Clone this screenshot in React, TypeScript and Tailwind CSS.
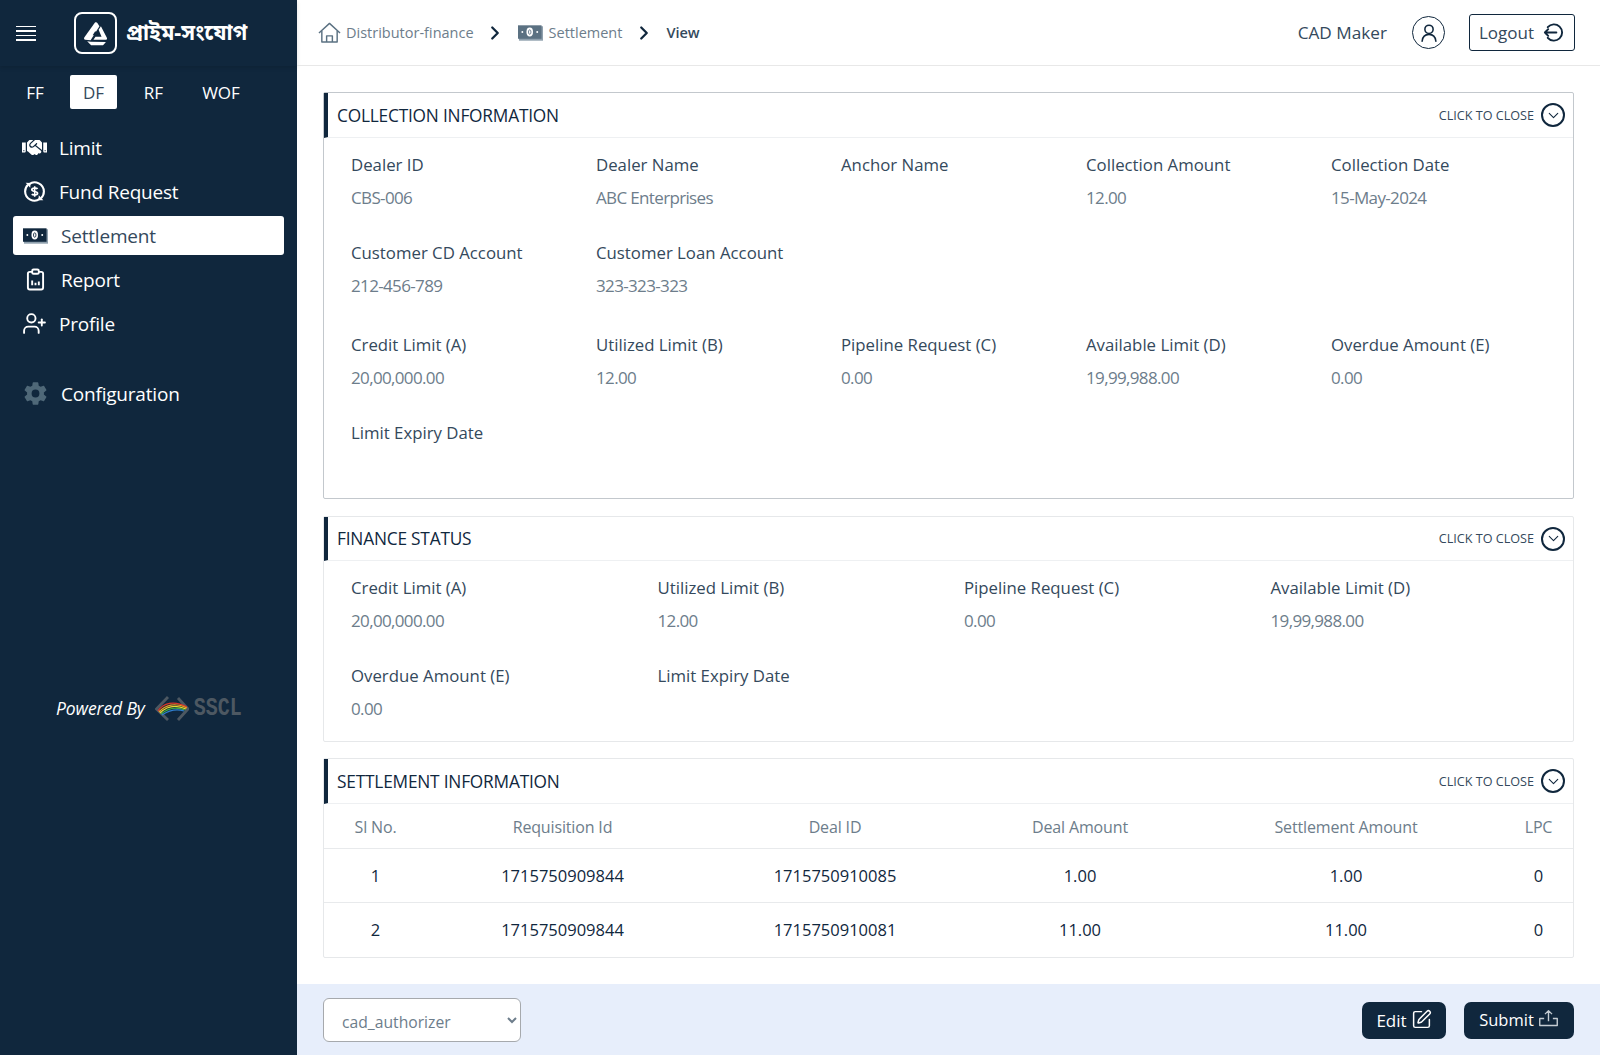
import React from "react";
import { ChevronDown, ChevronRight, SquarePen, UserPlus } from "lucide-react";
import { FaHandshake } from "react-icons/fa";
import { IoSettingsSharp } from "react-icons/io5";

const MoneyIcon = ({ className }: { className?: string }) => (
  <svg viewBox="0 0 26 16" className={className} fill="none">
    <rect x="1" y="1" width="25" height="15" fill="#8fa0ad" />
    <rect x="0" y="0" width="24.500" height="14" fill="currentColor" />
    <ellipse cx="12.200" cy="7" rx="3.400" ry="4.600" fill="#fff" />
    <ellipse cx="12.200" cy="7" rx="1.300" ry="2.300" fill="none" stroke="currentColor" strokeWidth="0.900" />
    <circle cx="4.500" cy="7" r="1" fill="#fff" />
    <circle cx="20" cy="7" r="1" fill="#fff" />
  </svg>
);

const FundIcon = () => (
  <svg viewBox="0 0 24 24" className="w-[23px] h-[23px]" fill="none" stroke="currentColor" strokeWidth="2.200">
    <path d="M6.500 4.200A9.800 9.800 0 0 1 21.800 12a9.800 9.800 0 0 1-3 7" />
    <path d="M17.500 19.800A9.800 9.800 0 0 1 2.200 12a9.800 9.800 0 0 1 3-7" />
    <path d="M2.800 2.800 8 3 7.500 8Z" fill="currentColor" stroke="none" />
    <path d="M21.200 21.200 16 21 16.500 16Z" fill="currentColor" stroke="none" />
    <path d="M15.200 9.300c-.8-1-6-1.200-6 .9 0 2.300 6 1.300 6 3.600 0 2.100-5.200 1.900-6 .9" strokeWidth="1.800" />
    <path d="M12.200 6.500v11" strokeWidth="1.600" />
  </svg>
);

const ReportIcon = () => (
  <svg viewBox="0 0 20 24" className="w-[19px] h-[23px]" fill="none" stroke="currentColor" strokeWidth="2">
    <rect x="2" y="4" width="16" height="18.500" rx="2" />
    <rect x="6.500" y="1.500" width="7" height="4.500" rx="1.500" fill="#10273d" />
    <path d="M6.500 18v-5M10 18v-2.500M13.500 18v-4" />
  </svg>
);

const HomeIcon = () => (
  <svg viewBox="0 0 24 24" className="w-[23px] h-[23px]" fill="none" stroke="#5b7182" strokeWidth="1.500" strokeLinejoin="round">
    <path d="M1 12.500 12 2.500l11 10" />
    <path d="M4 10.500V22h16V10.500" />
    <path d="M9 22v-6.500h6V22" />
  </svg>
);

// folded triangle mark of the product logo
const Logo = () => (
  <svg viewBox="0 0 24 24" className="w-[25px] h-[25px]" fill="#fff">
    <path d="M11.500 1.500c.8-.6 1.800-.4 2.300.4l2 3.200-8.500 13.400-5.200-.6c-1-.2-1.400-1.200-.9-2.100Z" />
    <path d="M15 8.500 17.200 5l5.700 11c.5 1-.1 2.100-1.200 2.100L10 18l2-3h5.800Z" />
    <path d="M4 19.500l3.500.3 14.500.3-2.300 2.600c-.3.300-.7.500-1.100.5H8.500c-.5 0-.9-.2-1.200-.5Z" />
    <path d="M11.800 9.500 9.300 13.700h5Z" fill="#10273d" />
  </svg>
);

const SsclLogo = () => (
  <svg viewBox="0 0 34 25" className="w-[34px] h-[25px]" fill="none">
    <path d="M13 1 1.500 13 13 24M23 2 33 13 23 24" stroke="#4d5862" strokeWidth="2.800" />
    <path d="M3 15C8 7 19 4 32 11" stroke="#d8382c" strokeWidth="1.200" />
    <path d="M4 16C10 9 20 6 32 12" stroke="#f0a020" strokeWidth="1.200" />
    <path d="M5 17C11 11 20 8 31 13" stroke="#e8d830" strokeWidth="1.200" />
    <path d="M6 18C12 13 20 10 30 14" stroke="#3faa48" strokeWidth="1.200" />
    <path d="M7 19C13 15 20 12 29 15" stroke="#2f7fd0" strokeWidth="1.200" />
  </svg>
);

const navItems = [
  { label: "Limit", icon: <FaHandshake className="w-[25px] h-[25px]" />, gap: "gap-[12px] pl-[22px]" },
  { label: "Fund Request", icon: <FundIcon />, gap: "gap-[13px] pl-[23px]" },
  { label: "Settlement", icon: <MoneyIcon className="w-[25px] h-[16px] text-[#10273d]" />, gap: "gap-[13px] pl-[23px]", active: true },
  { label: "Report", icon: <ReportIcon />, gap: "gap-[16px] pl-[26px]" },
  { label: "Profile", icon: <UserPlus className="w-[25px] h-[25px]" strokeWidth={1.800} />, gap: "gap-[12px] pl-[22px]" },
];

const Field = ({ label, value }: { label: string; value?: string }) => (
  <div>
    <div className="text-[16.800px] leading-[24px] text-[#34495c]">{label}</div>
    {value && <div className="mt-[9px] text-[17px] leading-[24px] text-[#6d7d8b] tracking-[-0.650px]">{value}</div>}
  </div>
);

const CardHeader = ({ title, tall }: { title: string; tall?: boolean }) => (
  <div className={`flex items-center justify-between ${tall ? "h-[45px]" : "h-[44px]"} border-l-[4px] border-l-[#10273d] border-b border-b-[#eef0f2] pl-[9px] pr-[8px]`}>
    <span className={`text-[17.300px] text-[#10273d] tracking-[-0.200px] ${tall ? "pt-[1px]" : ""}`}>{title}</span>
    <div className="flex items-center gap-[7px]">
      <span className="pt-[2px] text-[12.600px] text-[#34495c]">CLICK TO CLOSE</span>
      <span className="flex items-center justify-center w-[24px] h-[24px] rounded-full border-2 border-[#10273d] text-[#10273d]">
        <ChevronDown className="w-[17px] h-[17px]" strokeWidth={1.500} />
      </span>
    </div>
  </div>
);

const rows = [
  { sl: "1", req: "1715750909844", deal: "1715750910085", amount: "1.00", settle: "1.00", lpc: "0" },
  { sl: "2", req: "1715750909844", deal: "1715750910081", amount: "11.00", settle: "11.00", lpc: "0" },
];

const tableCols = "grid grid-cols-[103px_271px_274px_216px_316px_1fr] items-center text-center";

export default function App() {
  return (
    <div className="flex h-[1055px] w-[1600px] overflow-hidden bg-white font-['Open_Sans','Noto_Sans',sans-serif]">
      {/* Sidebar */}
      <aside className="flex flex-col w-[297px] shrink-0 bg-[#10273d] text-white">
        <div className="flex items-center h-[66px] pl-[16px] shadow-[0_2px_4px_rgba(0,0,0,0.12)]">
          <div className="flex flex-col gap-[3px] w-[20px]">
            <span className="h-[1.500px] bg-white" />
            <span className="h-[1.500px] bg-white" />
            <span className="h-[1.500px] bg-white" />
            <span className="h-[1.500px] bg-white" />
          </div>
          <div className="ml-[38px] flex items-center justify-center w-[43px] h-[42px] rounded-[8px] border-2 border-white">
            <Logo />
          </div>
          <span className="ml-[9px] mt-[4px] text-[21.500px] font-bold font-['Noto_Sans_Bengali','Noto_Sans',sans-serif]">প্রাইম-সংযোগ</span>
        </div>

        <div className="flex items-center mt-[9px] pl-[16px] h-[34px] text-[17px]">
          <span className="w-[38px] pt-[1px] text-center">FF</span>
          <span className="ml-[16px] w-[47px] h-[34px] pt-[1px] flex items-center justify-center bg-white text-[#34495c] rounded-[2px]">DF</span>
          <span className="ml-[16px] w-[41px] pt-[1px] text-center">RF</span>
          <span className="ml-[27px] w-[40px] pt-[1px] text-center">WOF</span>
        </div>

        <nav className="mt-[19px] flex flex-col text-[19px] tracking-[-0.200px] px-[13px]">
          {navItems.map((item) => (
            <div
              key={item.label}
              className={`flex items-center h-[39px] mb-[5px] -mx-[13px] ${item.gap} ${item.active ? "mx-0 !pl-[10px] bg-white text-[#34495c] rounded-[3px]" : ""}`}
            >
              {item.icon}
              <span className="pt-[2px]">{item.label}</span>
            </div>
          ))}
          <div className="flex items-center h-[39px] -mx-[13px] mt-[26px] pl-[23px] gap-[13px]">
            <IoSettingsSharp className="w-[25px] h-[25px] text-[#4f6878]" />
            <span className="pt-[2px]">Configuration</span>
          </div>
        </nav>

        <div className="mt-[280px] flex items-center pl-[56px]">
          <span className="italic text-[17.500px] tracking-[-0.100px]">Powered By</span>
          <span className="ml-[10px]"><SsclLogo /></span>
          <span className="ml-[5px] scale-y-[1.300] text-[20px] font-bold text-[#4d5862] font-['Liberation_Mono',monospace]">SSCL</span>
        </div>
      </aside>

      {/* Main */}
      <main className="flex flex-col flex-1 min-w-0">
        <header className="flex items-center justify-between h-[66px] shrink-0 border-b border-[#e8e8e8] pl-[21px] pr-[25px]">
          <div className="flex items-center">
            <HomeIcon />
            <span className="ml-[5px] text-[14.500px] text-[#6d7d8b]">Distributor-finance</span>
            <ChevronRight className="ml-[10px] w-[22px] h-[22px] text-[#10273d]" strokeWidth={2.500} />
            <MoneyIcon className="ml-[12px] w-[25px] h-[16px] text-[#5b7182]" />
            <span className="ml-[6px] text-[14.500px] text-[#6d7d8b]">Settlement</span>
            <ChevronRight className="ml-[11px] w-[22px] h-[22px] text-[#10273d]" strokeWidth={2.500} />
            <span className="ml-[11px] text-[14.500px] font-semibold text-[#34495c]">View</span>
          </div>
          <div className="flex items-center">
            <span className="text-[17.200px] text-[#34495c]">CAD Maker</span>
            <span className="ml-[25px] flex items-center justify-center w-[33px] h-[33px] rounded-full border border-[#10273d]">
              <svg viewBox="0 0 24 24" className="w-[22px] h-[22px]" fill="none" stroke="#10273d" strokeWidth="1.700" strokeLinecap="round">
                <circle cx="12" cy="8" r="4.500" />
                <path d="M4.500 21c.5-5 3.500-7.500 7.500-7.500s7 2.500 7.500 7.500" />
              </svg>
            </span>
            <button className="ml-[24px] flex items-center justify-center gap-[8px] w-[106px] h-[37px] rounded-[3px] border border-[#10273d] text-[17px] text-[#34495c]">
              Logout
              <svg viewBox="0 0 24 24" className="w-[23px] h-[23px]" fill="none" stroke="#10273d" strokeWidth="2" strokeLinecap="round" strokeLinejoin="round">
                <path d="M6 6.500a8.500 8.500 0 1 1 0 11" />
                <path d="M15 12H3M6.500 8.500 3 12l3.500 3.500" />
              </svg>
            </button>
          </div>
        </header>

        <div className="flex-1 flex flex-col px-[26px] pt-[26px]">
          {/* Collection information */}
          <section className="h-[407px] border border-[#c3c8cd] rounded-[2px]">
            <CardHeader title="COLLECTION INFORMATION" tall />
            <div className="pl-[27px] pt-[15px]">
              <div className="grid grid-cols-[repeat(5,245px)] h-[88px]">
                <Field label="Dealer ID" value="CBS-006" />
                <Field label="Dealer Name" value="ABC Enterprises" />
                <Field label="Anchor Name" />
                <Field label="Collection Amount" value="12.00" />
                <Field label="Collection Date" value="15-May-2024" />
              </div>
              <div className="grid grid-cols-[repeat(5,245px)] h-[92px]">
                <Field label="Customer CD Account" value="212-456-789" />
                <Field label="Customer Loan Account" value="323-323-323" />
              </div>
              <div className="grid grid-cols-[repeat(5,245px)] h-[88px]">
                <Field label="Credit Limit (A)" value="20,00,000.00" />
                <Field label="Utilized Limit (B)" value="12.00" />
                <Field label="Pipeline Request (C)" value="0.00" />
                <Field label="Available Limit (D)" value="19,99,988.00" />
                <Field label="Overdue Amount (E)" value="0.00" />
              </div>
              <Field label="Limit Expiry Date" />
            </div>
          </section>

          {/* Finance status */}
          <section className="mt-[17px] h-[226px] border border-[#e6e8ea] rounded-[2px]">
            <CardHeader title="FINANCE STATUS" />
            <div className="pl-[27px] pt-[15px]">
              <div className="grid grid-cols-[repeat(4,306.500px)] h-[88px]">
                <Field label="Credit Limit (A)" value="20,00,000.00" />
                <Field label="Utilized Limit (B)" value="12.00" />
                <Field label="Pipeline Request (C)" value="0.00" />
                <Field label="Available Limit (D)" value="19,99,988.00" />
              </div>
              <div className="grid grid-cols-[repeat(4,306.500px)]">
                <Field label="Overdue Amount (E)" value="0.00" />
                <Field label="Limit Expiry Date" />
              </div>
            </div>
          </section>

          {/* Settlement information */}
          <section className="mt-[16px] h-[200px] border border-[#e6e8ea] rounded-[2px]">
            <CardHeader title="SETTLEMENT INFORMATION" tall />
            <div className={`${tableCols} h-[45px] pt-[1px] border-b border-[#e8eaec] text-[16px] tracking-[-0.150px] text-[#6d7d8b]`}>
              <span>Sl No.</span>
              <span>Requisition Id</span>
              <span>Deal ID</span>
              <span>Deal Amount</span>
              <span>Settlement Amount</span>
              <span>LPC</span>
            </div>
            {rows.map((row, i) => (
              <div key={row.sl} className={`${tableCols} h-[54px] text-[16.500px] text-[#10273d] ${i === 0 ? "pt-[1px] border-b border-[#e8eaec]" : ""}`}>
                <span>{row.sl}</span>
                <span>{row.req}</span>
                <span>{row.deal}</span>
                <span>{row.amount}</span>
                <span>{row.settle}</span>
                <span>{row.lpc}</span>
              </div>
            ))}
          </section>
        </div>

        {/* Footer */}
        <footer className="flex items-center justify-between h-[71px] shrink-0 bg-[#e7eefb] pl-[26px] pr-[26px]">
          <select defaultValue="cad_authorizer" className="w-[198px] h-[44px] pl-[14px] pr-[4px] pt-[4px] rounded-[6px] border border-[#a6a9ad] bg-white text-[15.700px] text-[#6d7d8b]">
            <option value="cad_authorizer">cad_authorizer</option>
          </select>
          <div className="flex items-center gap-[18px] mt-[2px]">
            <button className="flex items-center justify-center gap-[4px] w-[84px] h-[37px] rounded-[7px] bg-[#10273d] text-[17px] text-white">
              Edit
              <SquarePen className="w-[21px] h-[21px] -mt-[3px]" strokeWidth={1.700} />
            </button>
            <button className="flex items-center justify-center gap-[4px] w-[110px] h-[37px] rounded-[7px] bg-[#10273d] text-[16.500px] text-white">
              Submit
              <svg viewBox="0 0 24 24" className="w-[21px] h-[21px] -mt-[4px]" fill="none" stroke="#c4ccd3" strokeWidth="1.600" strokeLinejoin="round">
                <path d="M7 12H2v8h20v-8h-5M12 15V3M8 7l4-4 4 4" />
              </svg>
            </button>
          </div>
        </footer>
      </main>
    </div>
  );
}
